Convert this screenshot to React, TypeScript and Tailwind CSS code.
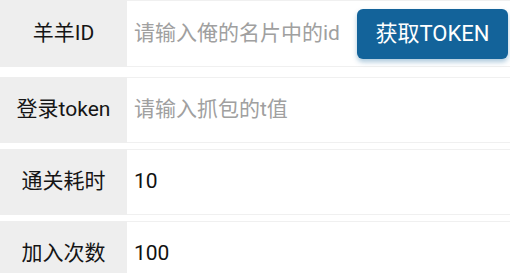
import type {ReactNode} from 'react';

interface FieldRowProps {
  label: string;
  placeholder?: string;
  value?: string;
  action?: ReactNode;
  className?: string;
}

function FieldRow({label, placeholder, value, action, className = ''}: FieldRowProps) {
  return (
    <div className={`flex h-[66px] ${className}`}>
      <div className="flex w-[127px] shrink-0 items-center justify-center bg-[#eeeeee] text-[21px] text-[#151515]">
        {label}
      </div>
      <div className="flex min-w-0 flex-1 items-center border-y border-[#f0f0f0] bg-white pl-[7px]">
        <input
          readOnly
          value={value ?? ''}
          placeholder={placeholder}
          className="w-0 min-w-0 flex-1 bg-transparent text-[21px] text-[#111] outline-none placeholder:text-[#a0a0a0]"
        />
        {action}
      </div>
    </div>
  );
}

export default function App() {
  return (
    <div
      className="h-[273px] w-[510px] overflow-hidden bg-white"
      style={{fontFamily: 'Roboto, "Noto Sans CJK SC", sans-serif'}}
    >
      <FieldRow
        label="羊羊ID"
        placeholder="请输入俺的名片中的id"
        className="mb-[10px] h-[67px]"
        action={
          <button className="mr-[2px] h-[50px] w-[151px] shrink-0 rounded-[6px] bg-[#13639a] text-[22px] text-white shadow-[0_3px_5px_rgba(19,99,154,0.35)]">
            获取TOKEN
          </button>
        }
      />
      <FieldRow label="登录token" placeholder="请输入抓包的t值" className="mb-[6px]" />
      <FieldRow label="通关耗时" value="10" className="mb-[6px]" />
      <FieldRow label="加入次数" value="100" />
    </div>
  );
}
